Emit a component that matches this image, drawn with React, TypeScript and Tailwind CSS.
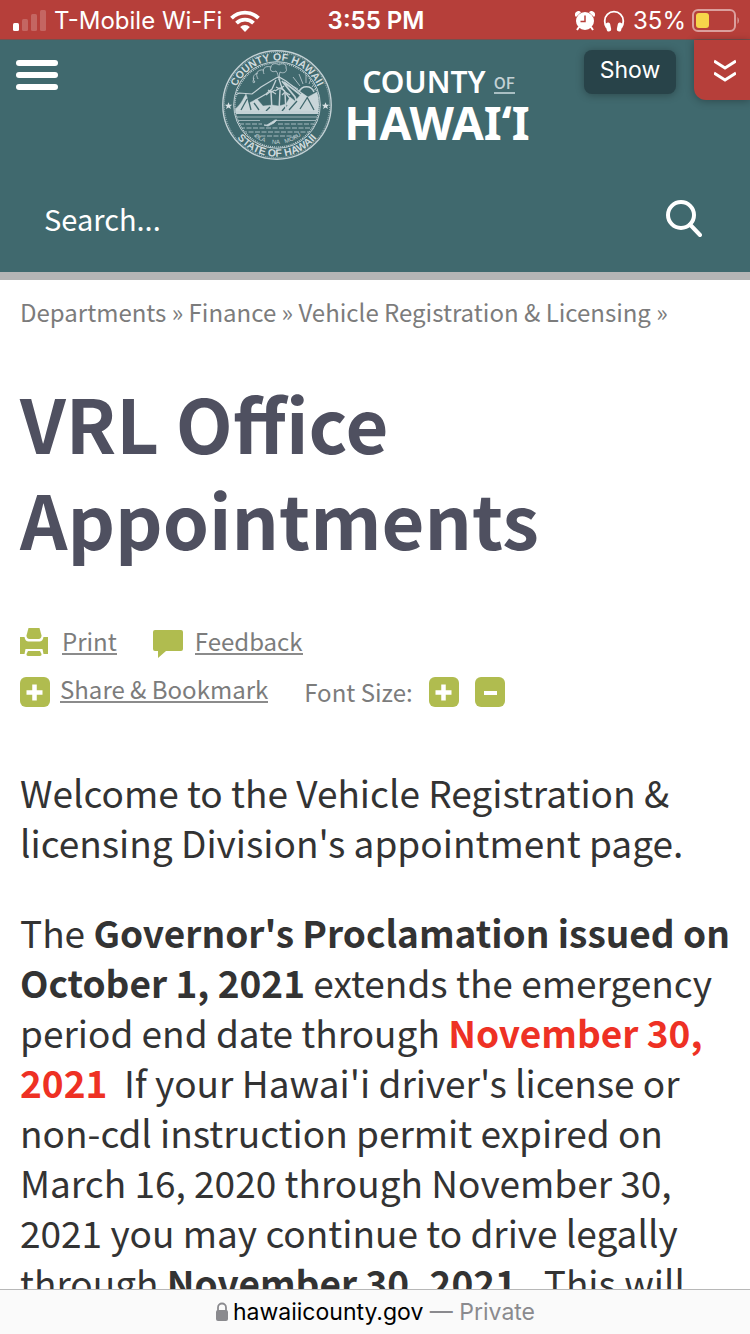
import type { ReactNode } from 'react';

const page = "font-['Noto_Sans_CJK_SC','Noto_Sans',sans-serif]";

function Strong({ children }: { children: ReactNode }) {
  return <strong className="font-bold">{children}</strong>;
}

function StatusBar() {
  return (
    <div className="flex h-10 shrink-0 items-center justify-between border-b border-[#75504e] bg-[#b63f3a] pt-0.5 pr-2.5 pl-3 text-2xl text-white">
      <div className="flex flex-1 items-center gap-2">
        <svg width="34" height="22" viewBox="0 0 34 22" fill="#fff" aria-label="Signal">
          <rect x="1" y="13" width="6" height="8" rx="1.5" />
          <g opacity=".2">
            <rect x="10" y="9" width="6" height="12" rx="1.5" />
            <rect x="19" y="4" width="6" height="17" rx="1.5" />
            <rect x="28" y="0" width="6" height="21" rx="1.5" />
          </g>
        </svg>
        <span className="whitespace-nowrap">T-Mobile Wi-Fi</span>
        <svg width="30" height="22" viewBox="0 0 30 22" fill="none" stroke="#fff" strokeWidth="3.8" aria-label="Wi-Fi">
          <path d="M1.5 8.2a19 19 0 0 1 27 0" />
          <path d="M6.5 13.2a12 12 0 0 1 17 0" />
          <path d="M15 22l-4.8-4.9a6.7 6.7 0 0 1 9.6 0z" fill="#fff" stroke="none" />
        </svg>
      </div>
      <span className="font-semibold">3:55 PM</span>
      <div className="flex flex-1 items-center justify-end gap-2">
        <svg width="20" height="20" viewBox="0 0 20 20" aria-label="Alarm">
          <path d="M1 6a3.200 3.200 0 0 1 5-4.800zM19 6a3.200 3.200 0 0 0-5-4.800z" fill="#fff" />
          <circle cx="10" cy="10" r="9" fill="#fff" />
          <path d="M4 16l-2 3M16 16l2 3" stroke="#fff" strokeWidth="2" />
          <path d="M10 4.500V10.500H5.500" fill="none" stroke="#b63f3a" strokeWidth="1.500" />
        </svg>
        <svg width="22" height="22" viewBox="0 0 22 22" aria-label="Headphones">
          <path d="M3.800 18C1.800 15.500 1.700 13 1.700 11a9.300 9.300 0 0 1 18.600 0c0 2-.1 4.500-2.100 7" fill="none" stroke="#fff" strokeWidth="1.800" />
          <rect x="3.200" y="12.500" width="4.500" height="9" rx="2" fill="#fff" transform="rotate(-12 5.500 17)" />
          <rect x="14.300" y="12.500" width="4.500" height="9" rx="2" fill="#fff" transform="rotate(12 16.500 17)" />
        </svg>
        <span className="flex items-center gap-1.5">
          35%
          <svg width="48" height="24" viewBox="0 0 48 24" aria-label="Battery">
            <rect x="1" y="1" width="42" height="21" rx="5" fill="none" stroke="#db9f9d" strokeWidth="2" />
            <rect x="4" y="4" width="13" height="15" rx="3" fill="#f7d54a" />
            <path d="M45.500 8a5 5 0 0 1 0 7z" fill="#db9f9d" />
          </svg>
        </span>
      </div>
    </div>
  );
}

function Seal() {
  const ring = { fill: 'none', stroke: '#c3d1d5' };
  const star = 'M0-3.700L1-1.200L3.700-1.200L1.600.5L2.400 3.100L0 1.600L-2.400 3.100L-1.600.5L-3.700-1.200L-1-1.200Z';
  return (
    <svg width="110" height="110" viewBox="0 0 110 110" className="shrink-0" aria-label="County seal">
      <defs>
        <path id="seal-top" d="M10.500 55a44.500 44.500 0 0 1 89 0" />
        <path id="seal-bottom" d="M3.300 55a51.700 51.700 0 0 0 103.400 0" />
        <path id="seal-motto" d="M16 55a39 39 0 0 0 78 0" />
        <clipPath id="seal-disc"><circle cx="55" cy="55" r="42" /></clipPath>
      </defs>
      <circle cx="55" cy="55" r="54.200" {...ring} strokeWidth="1.400" />
      <circle cx="55" cy="55" r="52.700" {...ring} strokeWidth=".8" strokeDasharray="1 1" />
      <circle cx="55" cy="55" r="43.300" {...ring} strokeWidth="1" />
      <circle cx="55" cy="55" r="42" {...ring} strokeWidth="1.200" strokeDasharray="1 1" />
      <g clipPath="url(#seal-disc)" stroke="#c3d1d5" fill="none" strokeWidth=".8">
        <path d="M57 30c-1-4-1-7-3-9-4 2-7-1-5-4 0-4 6-4 8-2 4-3 8 0 7 3 2 4-3 6-6 4-1 3-1 5 0 8" />
        <path d="M49 17c-7-2-9 3-7 7M42 20c-7-1-9 4-6 9M36 23c-5 1-6 6-3 9-3 2-2-1-1-4" />
        <path d="M12 46l5-3 13 1 9-7 15-9 3-1 7 4 23 18 7-4 7 6" strokeWidth="1.200" />
        <path d="M57 29l3 9 6 8 12 15M54 30l-4 9-6 5-12 7" strokeWidth="1.300" />
        <path d="M60 31l13 16 5 14M62 32l18 14" strokeWidth="1.800" />
        <path d="M13 59c5-3 8-10 11-15l3 9 8-4 6 7 9-1 7 1 7-2 4-7 5 4 7-8 6 4 9-5 3 4 5-2 5 13v5H13z" fill="#c9d6d9" strokeWidth=".4" />
        <path d="M19 60l6-11M29 60l-3-12M37 60l-5-7M67 60l8-9M78 59l7-11M92 60l-7-13M44 61l4-4M60 61l5-6" stroke="#40696e" strokeWidth="1.300" />
        <path d="M50 61l-1-19M57 61l1-21M64 61l-1-18" strokeWidth="1.500" />
        <path d="M44 45l5-4 5 3M46 40l3 2 4-2M53 41l5-3 5 3M54 37l4 2 4-3M60 45l3-3 5 3" strokeWidth="1.300" />
        <path d="M77 42a8 8 0 0 1 15 0" strokeWidth="1.500" />
        <path d="M76 39l-7-4M78 36l-7-9M81 34l-4-10M84 33V23M87 34l4-10M90 37l6-8M92 40l8-4" />
        <path d="M13 62.500h84" strokeWidth="3" />
        <path d="M13 67h84M14 70.500h24M54 70.500h40" strokeWidth=".7" />
        <path d="M17 74h23m16 0h37M18 78h74M20 82h70M32 86h46" strokeDasharray="5 1.500" />
        <path d="M42 75l3 0 8-5 2 0-3 3-6 3z" fill="#c9d6d9" />
      </g>
      <g fill="#d0dbde" className="font-['Liberation_Sans',Arial,sans-serif] font-bold" textAnchor="middle">
        <text fontSize="10.500"><textPath href="#seal-top" startOffset="50%">COUNTY OF HAWAII</textPath></text>
        <text fontSize="10.500"><textPath href="#seal-bottom" startOffset="50%">STATE OF HAWAII</textPath></text>
      </g>
      <g fill="#c3d1d5" className="font-['Liberation_Sans',Arial,sans-serif]" fontSize="6" textAnchor="middle">
        <text><textPath href="#seal-motto" startOffset="35%">OLA</textPath></text>
        <text><textPath href="#seal-motto" startOffset="49%">NA</textPath></text>
        <text><textPath href="#seal-motto" startOffset="64%">MOKU</textPath></text>
      </g>
      <path d={star} transform="translate(6.500 56)" fill="#d8e1e4" />
      <path d={star} transform="translate(103.500 56)" fill="#d8e1e4" />
    </svg>
  );
}

function Header() {
  return (
    <header className="relative shrink-0 border-b-8 border-[#b5b5b5] bg-[#40696e] text-white">
      <div className="flex h-32 items-start px-4 pt-2.5">
        <button type="button" aria-label="Menu" className="flex w-10.5 flex-col gap-1.5 pt-2.5">
          <span className="h-1.5 w-full rounded-full bg-white" />
          <span className="h-1.5 w-full rounded-full bg-white" />
          <span className="h-1.5 w-full rounded-full bg-white" />
        </button>
        <a href="#home" className="mx-auto flex gap-3 pr-10">
          <Seal />
          <span className="flex flex-col pt-4 font-bold">
            <span className="flex gap-2 pl-4.5 font-['Noto_Sans',sans-serif] text-[30px] leading-8 font-semibold">
              COUNTY
              <span className="mt-1.5 h-5.5 border-b-2 border-[#a9bfc3] font-['Noto_Sans_CJK_SC',sans-serif] text-base leading-5 font-medium text-[#c3d1d5]">OF</span>
            </span>
            <span className="font-['Noto_Sans',sans-serif] text-[46px] leading-12 whitespace-nowrap">HAWAIʻI</span>
          </span>
        </a>
      </div>
      <form className="flex h-26 items-center justify-between pr-12 pb-1 pl-11" onSubmit={(e) => e.preventDefault()}>
        <input aria-label="Search" placeholder="Search..." className={`${page} min-w-0 flex-1 bg-transparent text-[29px] leading-10 text-white outline-none placeholder:text-white placeholder:opacity-100`} />
        <button type="submit" aria-label="Submit search">
          <svg width="38" height="40" viewBox="0 0 38 40" fill="none" stroke="#fff" strokeWidth="4" strokeLinecap="round">
            <circle cx="17" cy="17" r="13" />
            <path d="M26 26.500L36 37" />
          </svg>
        </button>
      </form>
      <button type="button" className="absolute top-2.5 right-18.5 h-11 w-23 rounded-lg bg-[#284349] pb-1 text-[23px] shadow-[0_1px_8px_rgba(0,0,0,0.3)]">Show</button>
      <button type="button" aria-label="Expand" className="absolute top-0 right-0 flex h-15 w-14 items-center justify-center rounded-bl-xl bg-[#b63f3a] pl-1.5 shadow-[0_1px_8px_rgba(0,0,0,0.3)]">
        <svg width="22" height="24" viewBox="0 0 22 24" fill="none" stroke="#fff" strokeWidth="3">
          <path d="M0 3l11 7 11-7M0 15l11 7 11-7" />
        </svg>
      </button>
    </header>
  );
}

function SquareSign({ minus = false }: { minus?: boolean }) {
  return (
    <svg width="30" height="30" viewBox="0 0 30 30" className="shrink-0">
      <rect width="30" height="30" rx="6" fill="#b0bc4f" />
      <path d={minus ? 'M9 16h13' : 'M6.500 15.500h16M14.500 7.500v16'} stroke="#fff" strokeWidth={minus ? 4 : 4.5} strokeLinecap="butt" />
    </svg>
  );
}

function Tools() {
  return (
    <div className="text-2xl leading-8 text-[#7c7c7c]">
      <div className="flex items-center">
        <a href="#print" className="flex items-center gap-3.5">
          <svg width="28" height="28" viewBox="0 0 28 28" fill="#b0bc4f">
            <path d="M8.500 0h11l2 7.500c0 2-1 3.500-3 3.500h-9c-2 0-3-1.500-3-3.500z" />
            <path d="M0 9h4.500c.5 3 2 4.500 4 4.500h11c2 0 3.500-1.500 4-4.500H28v17h-4.500l-1-5h-17l-1 5H0z" />
            <path d="M8 23h12l1.500 3c.2 1.200-.5 2-1.500 2H8c-1 0-1.700-.8-1.500-2z" />
          </svg>
          <span className="border-b-2 border-[#8b8b8b] leading-6">Print</span>
        </a>
        <a href="#feedback" className="ml-9 flex items-center gap-3">
          <svg width="30" height="28" viewBox="0 0 30 28" fill="#b0bc4f" className="mt-1">
            <path d="M2 0h26a2 2 0 0 1 2 2v17a2 2 0 0 1-2 2H13l-8 7v-7H2a2 2 0 0 1-2-2V2a2 2 0 0 1 2-2z" />
          </svg>
          <span className="border-b-2 border-[#8b8b8b] leading-6">Feedback</span>
        </a>
      </div>
      <div className="mt-4.5 flex items-center">
        <a href="#share" className="flex items-start gap-2.5">
          <SquareSign />
          <span className="border-b-2 border-[#8b8b8b] leading-6">Share &amp; Bookmark</span>
        </a>
        <span className="ml-9">Font Size:</span>
        <button type="button" aria-label="Increase font size" className="ml-4"><SquareSign /></button>
        <button type="button" aria-label="Decrease font size" className="ml-4"><SquareSign minus /></button>
      </div>
    </div>
  );
}

export default function App() {
  return (
    <div className="flex h-screen flex-col overflow-hidden bg-white font-['Inter',sans-serif]">
      <StatusBar />
      <Header />
      <main className={`${page} min-h-0 flex-1 overflow-hidden px-5 pt-3.5`}>
        <nav aria-label="Breadcrumb" className="text-2xl leading-9 whitespace-nowrap text-[#7c7c7c]">
          <a href="#departments">Departments</a> » <a href="#finance">Finance</a> » <a href="#vrl">Vehicle Registration &amp; Licensing</a> »
        </nav>
        <h1 className="mt-11 mb-15 text-[74px] leading-24 font-bold text-[#4f5060]">VRL Office<br />Appointments</h1>
        <Tools />
        <div className="mt-[59px] text-[37px] leading-[50px] whitespace-nowrap text-[#333]">
          <p>Welcome to the Vehicle Registration &amp;<br />licensing Division's appointment page.</p>
          <p className="mt-10">
            The <Strong>Governor's Proclamation issued on<br />October 1, 2021</Strong> extends the emergency<br />
            period end date through <strong className="font-bold text-[#ee3124]">November 30,<br />2021</strong>&nbsp; If your Hawai'i driver's license or<br />
            non-cdl instruction permit expired on<br />March 16, 2020 through November 30,<br />2021 you may continue to drive legally<br />
            through <Strong>November 30, 2021</Strong>.&nbsp; This will
          </p>
        </div>
      </main>
      <footer className="flex h-[45px] shrink-0 items-center justify-center gap-1 border-t border-[#b8b8b8] bg-[#fafafa] text-[23px] text-black">
        <svg width="14" height="20" viewBox="0 0 14 20" aria-label="Secure">
          <rect x="1" y="8" width="12" height="11" rx="2" fill="#8a8a8e" />
          <path d="M3 9V5.500a4 4 0 0 1 8 0V9" fill="none" stroke="#8a8a8e" strokeWidth="1.800" />
        </svg>
        <span>hawaiicounty.gov <span className="text-[#8a8a8e]">— Private</span></span>
      </footer>
    </div>
  );
}
